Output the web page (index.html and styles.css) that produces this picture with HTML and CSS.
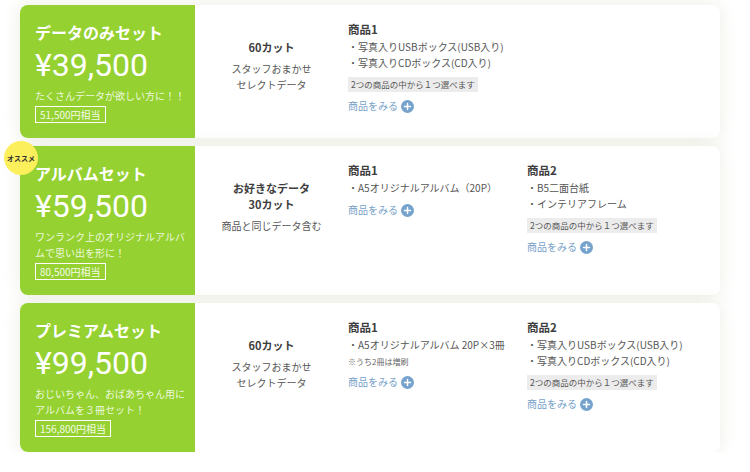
FILE: index.html
```html
<!DOCTYPE html>
<html lang="ja">
<head>
<meta charset="utf-8">
<title>プラン</title>
<link rel="stylesheet" href="styles.css">
</head>
<body>
<div class="plans">

  <div class="card">
    <div class="plan">
      <h2 class="plan-name">データのみセット</h2>
      <p class="plan-price">¥39,500</p>
      <p class="plan-desc">たくさんデータが欲しい方に！！</p>
      <span class="plan-value">51,500円相当</span>
    </div>
    <div class="cut">
      <p class="cut-title">60カット</p>
      <p class="cut-note">スタッフおまかせ<br>セレクトデータ</p>
    </div>
    <div class="products">
      <div class="product">
        <h3 class="product-title">商品1</h3>
        <ul class="product-list">
          <li>・写真入りUSBボックス(USB入り)</li>
          <li>・写真入りCDボックス(CD入り)</li>
        </ul>
        <span class="choice">2つの商品の中から１つ選べます</span>
        <a class="more" href="#">商品をみる<svg class="plus" viewBox="0 0 13 13" width="13" height="13"><circle cx="6.5" cy="6.5" r="6.5" fill="#76a3cd"/><path d="M6.5 3.5v6M3.5 6.5h6" stroke="#fff" stroke-width="1.5" stroke-linecap="round"/></svg></a>
      </div>
    </div>
  </div>

  <div class="card">
    <span class="badge">オススメ</span>
    <div class="plan">
      <h2 class="plan-name">アルバムセット</h2>
      <p class="plan-price">¥59,500</p>
      <p class="plan-desc">ワンランク上のオリジナルアルバムで思い出を形に！</p>
      <span class="plan-value">80,500円相当</span>
    </div>
    <div class="cut">
      <p class="cut-title">お好きなデータ<br>30カット</p>
      <p class="cut-note">商品と同じデータ含む</p>
    </div>
    <div class="products">
      <div class="product">
        <h3 class="product-title">商品1</h3>
        <ul class="product-list">
          <li>・A5オリジナルアルバム（20P）</li>
        </ul>
        <a class="more" href="#">商品をみる<svg class="plus" viewBox="0 0 13 13" width="13" height="13"><circle cx="6.5" cy="6.5" r="6.5" fill="#76a3cd"/><path d="M6.5 3.5v6M3.5 6.5h6" stroke="#fff" stroke-width="1.5" stroke-linecap="round"/></svg></a>
      </div>
      <div class="product">
        <h3 class="product-title">商品2</h3>
        <ul class="product-list">
          <li>・B5二面台紙</li>
          <li>・インテリアフレーム</li>
        </ul>
        <span class="choice">2つの商品の中から１つ選べます</span>
        <a class="more" href="#">商品をみる<svg class="plus" viewBox="0 0 13 13" width="13" height="13"><circle cx="6.5" cy="6.5" r="6.5" fill="#76a3cd"/><path d="M6.5 3.5v6M3.5 6.5h6" stroke="#fff" stroke-width="1.5" stroke-linecap="round"/></svg></a>
      </div>
    </div>
  </div>

  <div class="card">
    <div class="plan">
      <h2 class="plan-name">プレミアムセット</h2>
      <p class="plan-price">¥99,500</p>
      <p class="plan-desc">おじいちゃん、おばあちゃん用にアルバムを３冊セット！</p>
      <span class="plan-value">156,800円相当</span>
    </div>
    <div class="cut">
      <p class="cut-title">60カット</p>
      <p class="cut-note">スタッフおまかせ<br>セレクトデータ</p>
    </div>
    <div class="products">
      <div class="product">
        <h3 class="product-title">商品1</h3>
        <ul class="product-list">
          <li>・A5オリジナルアルバム 20P×3冊</li>
        </ul>
        <p class="product-note">※うち2冊は増刷</p>
        <a class="more" href="#">商品をみる<svg class="plus" viewBox="0 0 13 13" width="13" height="13"><circle cx="6.5" cy="6.5" r="6.5" fill="#76a3cd"/><path d="M6.5 3.5v6M3.5 6.5h6" stroke="#fff" stroke-width="1.5" stroke-linecap="round"/></svg></a>
      </div>
      <div class="product">
        <h3 class="product-title">商品2</h3>
        <ul class="product-list">
          <li>・写真入りUSBボックス(USB入り)</li>
          <li>・写真入りCDボックス(CD入り)</li>
        </ul>
        <span class="choice">2つの商品の中から１つ選べます</span>
        <a class="more" href="#">商品をみる<svg class="plus" viewBox="0 0 13 13" width="13" height="13"><circle cx="6.5" cy="6.5" r="6.5" fill="#76a3cd"/><path d="M6.5 3.5v6M3.5 6.5h6" stroke="#fff" stroke-width="1.5" stroke-linecap="round"/></svg></a>
      </div>
    </div>
  </div>

</div>
</body>
</html>
```
FILE: styles.css
```css
* { box-sizing: border-box; }
html, body { margin: 0; padding: 0; background: #fff; }
body {
  font-family: "Noto Sans CJK JP", "Noto Sans", sans-serif;
  color: #555;
}
p, h2, h3, ul { margin: 0; padding: 0; }
ul { list-style: none; }

.plans {
  display: flex;
  flex-direction: column;
  gap: 8px;
  width: 700px;
  margin: 5px 0 0 20px;
}

.card {
  position: relative;
  display: flex;
  background: #fff;
  border-radius: 8px;
  box-shadow: 0 0 18px rgba(195, 200, 170, 0.32);
}

.plan {
  width: 175px;
  flex: none;
  background: #94d131;
  color: #fff;
  border-radius: 8px 0 0 8px;
  padding: 14px 8px 15px 15px;
}
.plan-name {
  font-size: 16px;
  line-height: 26px;
  font-weight: 700;
}
.plan-price {
  font-family: Roboto, "Noto Sans", sans-serif;
  font-size: 32px;
  line-height: 40px;
  font-weight: 400;
}
.plan-desc {
  margin-top: 3px;
  font-size: 10px;
  line-height: 16px;
  color: #eef8dd;
}
.plan-value {
  display: block;
  width: fit-content;
  margin-top: 2px;
  border: 1px solid #fff;
  font-size: 10px;
  line-height: 15px;
  padding: 0 4px;
  color: #f4fbe8;
}

.cut {
  width: 153px;
  flex: none;
  text-align: center;
  padding-top: 34px;
}
.cut-title {
  font-size: 11px;
  line-height: 16px;
  font-weight: 700;
  color: #3d3d3d;
}
.cut-note {
  margin-top: 6px;
  font-size: 10px;
  line-height: 16px;
  color: #555;
}

.products {
  display: flex;
}
.product {
  width: 179px;
  flex: none;
  padding-top: 16px;
}
.product-title {
  font-size: 11.5px;
  line-height: 16px;
  font-weight: 700;
  color: #3d3d3d;
}
.product-list {
  margin-top: 2px;
  font-size: 10px;
  line-height: 16px;
  color: #555;
}
.product-note {
  margin-top: 3px;
  font-size: 8px;
  line-height: 12px;
  color: #666;
}
.choice {
  display: block;
  width: fit-content;
  margin-top: 6px;
  background: #ececec;
  color: #555;
  font-size: 8.5px;
  line-height: 15px;
  padding: 0 3px;
}
.more {
  display: flex;
  align-items: center;
  gap: 3px;
  width: fit-content;
  margin-top: 6px;
  font-size: 10px;
  line-height: 16px;
  color: #76a0c8;
  text-decoration: none;
}
.plus { display: block; }

.badge {
  position: absolute;
  left: -16px;
  top: -5px;
  width: 34px;
  height: 34px;
  border-radius: 50%;
  background: #fcef5c;
  color: #333;
  font-size: 7px;
  font-weight: 700;
  display: flex;
  align-items: center;
  justify-content: center;
  white-space: nowrap;
}
```
